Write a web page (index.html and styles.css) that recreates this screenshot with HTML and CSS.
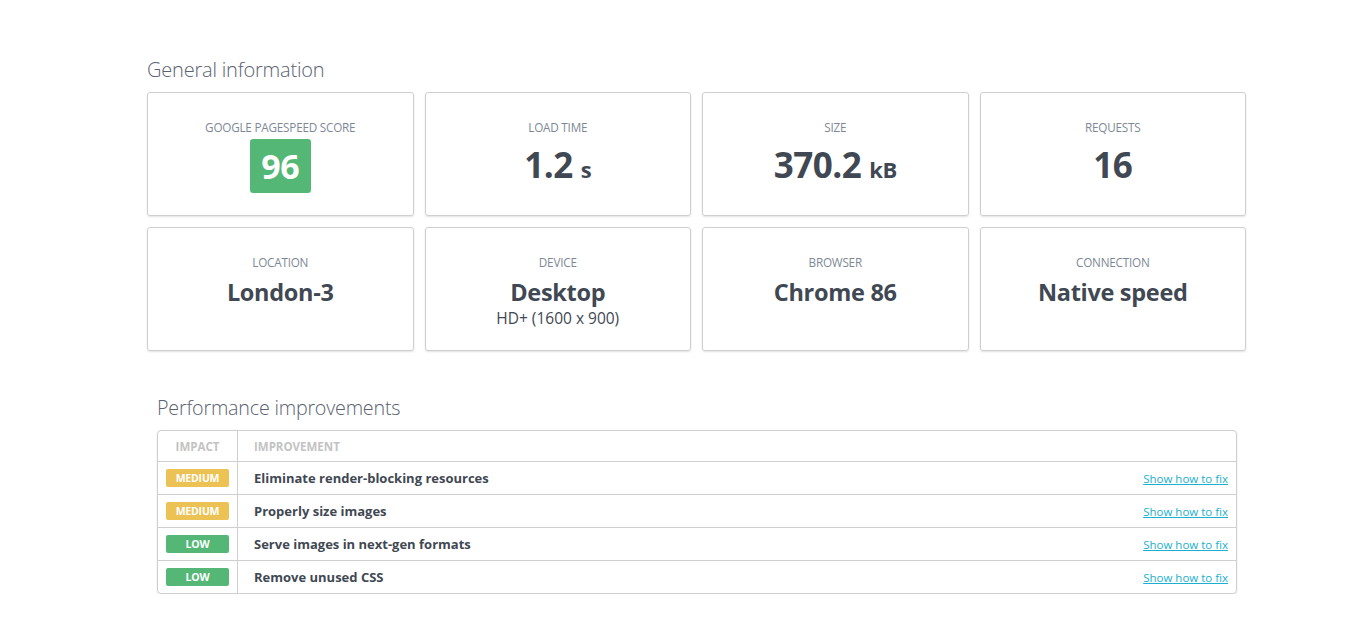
FILE: index.html
```html
<!DOCTYPE html>
<html>
<head>
<meta charset="utf-8">
<link rel="stylesheet" href="styles.css">
</head>
<body>
<div class="page">
  <h2 class="section-title">General information</h2>
  <div class="cards">
    <div class="card">
      <div class="label">GOOGLE PAGESPEED SCORE</div>
      <div class="score">96</div>
    </div>
    <div class="card">
      <div class="label">LOAD TIME</div>
      <div class="big">1.2<span class="unit">s</span></div>
    </div>
    <div class="card">
      <div class="label">SIZE</div>
      <div class="big">370.2<span class="unit">kB</span></div>
    </div>
    <div class="card">
      <div class="label">REQUESTS</div>
      <div class="big">16</div>
    </div>
    <div class="card">
      <div class="label">LOCATION</div>
      <div class="mid">London-3</div>
    </div>
    <div class="card">
      <div class="label">DEVICE</div>
      <div class="mid">Desktop</div>
      <div class="sub">HD+ (1600 x 900)</div>
    </div>
    <div class="card">
      <div class="label">BROWSER</div>
      <div class="mid">Chrome 86</div>
    </div>
    <div class="card">
      <div class="label">CONNECTION</div>
      <div class="mid">Native speed</div>
    </div>
  </div>

  <div class="perf">
    <h2 class="section-title">Performance improvements</h2>
    <div class="table">
      <div class="row head">
        <div class="c-impact">IMPACT</div>
        <div class="c-imp">IMPROVEMENT</div>
      </div>
      <div class="row">
        <div class="c-impact"><span class="badge medium">MEDIUM</span></div>
        <div class="c-imp"><span class="name">Eliminate render-blocking resources</span><a class="fix" href="#">Show how to fix</a></div>
      </div>
      <div class="row">
        <div class="c-impact"><span class="badge medium">MEDIUM</span></div>
        <div class="c-imp"><span class="name">Properly size images</span><a class="fix" href="#">Show how to fix</a></div>
      </div>
      <div class="row">
        <div class="c-impact"><span class="badge low">LOW</span></div>
        <div class="c-imp"><span class="name">Serve images in next-gen formats</span><a class="fix" href="#">Show how to fix</a></div>
      </div>
      <div class="row last">
        <div class="c-impact"><span class="badge low">LOW</span></div>
        <div class="c-imp"><span class="name">Remove unused CSS</span><a class="fix" href="#">Show how to fix</a></div>
      </div>
    </div>
  </div>
</div>
</body>
</html>
```
FILE: styles.css
```css
* { box-sizing: border-box; }
html, body { margin: 0; padding: 0; background: #fff; }
body {
  font-family: "Open Sans", "Noto Sans", "Liberation Sans", sans-serif;
  color: #3f4853;
}
.page {
  width: 1099px;
  margin-left: 147px;
  padding-top: 56px;
}
.section-title {
  margin: 0;
  font-size: 20px;
  font-weight: 300;
  color: #5a6270;
  line-height: 28px;
  letter-spacing: -0.2px;
}
.cards {
  margin-top: 8px;
  display: grid;
  grid-template-columns: repeat(4, 1fr);
  column-gap: 11px;
  row-gap: 11px;
}
.card {
  height: 124px;
  border: 1px solid #cfcfcf;
  border-radius: 3px;
  box-shadow: 0 1px 2px rgba(0,0,0,0.12);
  display: flex;
  flex-direction: column;
  align-items: center;
  padding-top: 26px;
}
.label {
  font-size: 11.7px;
  line-height: 16px;
  color: #7d8896;
  letter-spacing: -0.2px;
}
.score {
  margin-top: 4px;
  width: 61px;
  height: 54px;
  border-radius: 3px;
  background: #55b776;
  color: #fff;
  font-weight: 700;
  font-size: 34px;
  line-height: 54px;
  text-align: center;
  letter-spacing: -0.5px;
}
.big {
  margin-top: 5px;
  font-size: 35px;
  font-weight: 700;
  line-height: 50px;
  color: #3f4853;
  letter-spacing: -0.5px;
}
.unit {
  font-size: 22px;
  margin-left: 8px;
}
.mid {
  margin-top: 6px;
  font-size: 23.5px;
  font-weight: 700;
  line-height: 32px;
  letter-spacing: -0.3px;
}
.sub {
  font-size: 15.5px;
  line-height: 20px;
  margin-top: 0px;
}
.perf {
  margin-top: 44px;
  margin-left: 10px;
  width: 1080px;
}
.perf .section-title { line-height: 26px; font-size: 19.7px; }
.table {
  margin-top: 9px;
  border: 1px solid #cfcfcf;
  border-radius: 4px;
  box-shadow: 0 1px 2px rgba(0,0,0,0.12);
}
.row {
  display: flex;
  height: 33px;
  border-top: 1px solid #cfcfcf;
}
.row.head { border-top: none; height: 30px; }
.c-impact {
  width: 80px;
  border-right: 1px solid #cfcfcf;
  display: flex;
  align-items: center;
  justify-content: center;
}
.c-imp {
  flex: 1;
  display: flex;
  align-items: center;
  justify-content: space-between;
  padding: 0 8px 0 16px;
}
.head .c-impact, .head .c-imp {
  font-size: 11.5px;
  font-weight: 700;
  color: #c3c3c3;
}
.badge {
  width: 63px;
  height: 18px;
  border-radius: 2px;
  color: #fff;
  font-size: 10.5px;
  font-weight: 700;
  line-height: 18px;
  text-align: center;
  letter-spacing: -0.2px;
}
.badge.medium { background: #ecc254; }
.badge.low { background: #55b776; }
.name {
  font-size: 13px;
  font-weight: 700;
  color: #3f4853;
}
.fix {
  font-size: 11.5px;
  color: #1bb0cf;
  text-decoration: underline;
}
```
